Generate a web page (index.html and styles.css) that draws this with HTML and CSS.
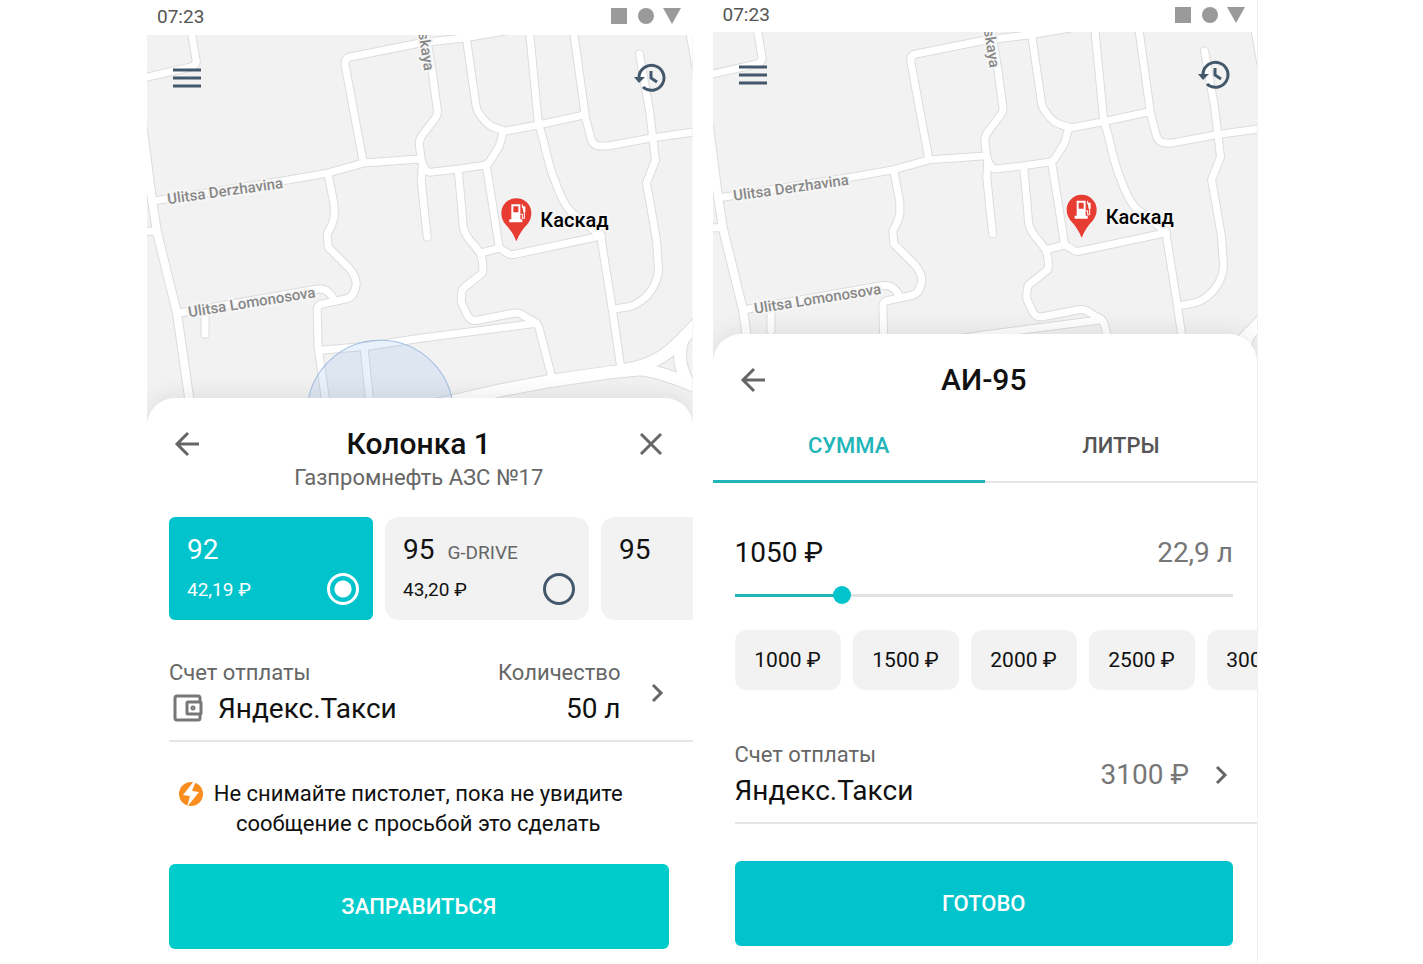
FILE: index.html
```html
<!DOCTYPE html>
<html lang="ru">
<head>
    <meta charset="UTF-8">
    <meta name="viewport" content="width=device-width, initial-scale=1.0">
    <title>Заправка</title>

    <link rel="stylesheet" href="styles.css">
</head>
<body>
    <!-- Shared drawings -->
    <svg class="sprite" aria-hidden="true">
        <defs>
            <g id="roads">
                <path d="M191 30 L196 60 Q197 65 191 67 L147 77 L140 79"/>
                <path d="M140 231 H157"/>
                <path d="M153 201 L287 180 L327 173 L363 163 L420 159"/>
                <path d="M363 162 L345 65 Q344 58 350 57 L420 43 L463 38 L505 31"/>
                <path d="M425 30 L432 72 L437 109 Q438 114 435 118 L422 135 Q419 139 419 144 L421 160 Q425 173 431 172 L457 169 L485 165 L489 162 L499 146 L503 131"/>
                <path d="M422 165 L421 180 L424 210 L427 237"/>
                <path d="M466 38 L476 107 Q477 112 480 115 Q487 125 493 127 L505 131 L537 125 L583 115"/>
                <path d="M529 30 L538 123 L543 140 Q549 168 555 182 Q562 202 570 211 L601 236"/>
                <path d="M573 30 L585 117 L590 136 Q592 146 600 146 L607 146 L650 138 L700 131"/>
                <path d="M639 54 L649 110 L652 135 L655 160 L646 183 L650 205 L656 240 L658 268 Q658 282 647 295 Q636 306 625 307 L613 309"/>
                <path d="M689 30 L697 76"/>
                <path d="M458 171 L461 203 L463 227 Q465 236 474 245 L480 253 Q484 264 482 273 L463 288 Q461 291 461 302 L467 315 Q470 321 477 320 L513 313 Q519 312 524 316 L535 322 Q539 326 540 333 L551 375"/>
                <path d="M486 166 L492 203 L499 248"/>
                <path d="M480 253 L499 248 L509 254 Q511 255 515 254 L600 236"/>
                <path d="M600 234 L612 310 L620 365"/>
                <path d="M536 323 L420 338 L367 346 L320 350"/>
                <path d="M178 313 L316 289 Q328 287 334 300"/>
                <path d="M205 315 V334"/>
                <path d="M328 174 L334 205 L334 217 Q333 223 327 234 L328 247 L349 268 Q356 276 356 284 Q354 298 344 299 L321 304 Q317 305 317 310 L318 347 L325 397 L328 425"/>
                <path d="M364 348 L369 397 L371 425"/>
            </g>
            <g id="wide-roads">
                <path d="M143 130 L152 200 L157 232 L177 313 L189 397 L193 425"/>
            </g>
            <g id="highway">
                <path d="M430 406 L500 390 L548 381 L610 372 L640 369 Q663 372 700 388"/>
                <path d="M620 370 Q650 367 671 349 Q686 336 702 317"/>
                <path d="M684 336 Q674 355 686 380"/>
            </g>
        </defs>

        <symbol id="city" viewBox="147 35 545 390" preserveAspectRatio="xMinYMin slice">
            <rect class="land" x="147" y="35" width="900" height="700"/>
            <g class="road-edge">
                <use href="#roads"/>
                <use href="#wide-roads" class="edge-wide"/>
                <use href="#highway" class="edge-highway"/>
            </g>
            <g class="road-fill">
                <use href="#roads"/>
                <use href="#wide-roads" class="fill-wide"/>
                <use href="#highway" class="fill-highway"/>
            </g>
            <circle class="area" cx="380" cy="413" r="73"/>
            <g class="street">
                <text transform="translate(168 204) rotate(-8)">Ulitsa Derzhavina</text>
                <text transform="translate(189 317) rotate(-9)">Ulitsa Lomonosova</text>
                <text transform="translate(418 33) rotate(81)">skaya</text>
            </g>
            <path class="pin" d="M516 241 Q512 231 505 224 Q501 219 501 213 A15 15 0 0 1 531 213 Q531 219 527 224 Q520 231 516 241 Z"/>
            <path class="pump" fill-rule="evenodd" d="M511 204 H520 V219 H522 V222 H509 V219 H511 Z M513 206 V212 H518 V206 Z"/>
            <path class="hose" d="M520 214 H522 V218 H524 V209 L522 207 V204"/>
            <path class="pump" d="M522 206 H525 V212 H523 Z"/>
            <text class="station" x="540" y="227">Каскад</text>
        </symbol>

        <symbol id="icon-history" viewBox="0 0 32 32">
            <path class="line" d="M5 15 A12.5 12.5 0 1 1 9 25 M17 9 V16 L23 20"/>
            <path class="solid" d="M0 15 H11 L5 21 Z"/>
        </symbol>
        <symbol id="icon-menu" viewBox="0 0 28 20">
            <path class="line" d="M0 2 H28 M0 10 H28 M0 18 H28"/>
        </symbol>
        <symbol id="icon-back" viewBox="0 0 26 26">
            <path class="line" d="M25 13 H3 M14 2 L3 13 L14 24"/>
        </symbol>
        <symbol id="icon-close" viewBox="0 0 26 26">
            <path class="line" d="M3 3 L23 23 M23 3 L3 23"/>
        </symbol>
        <symbol id="icon-next" viewBox="0 0 24 24">
            <path class="line" d="M8 4 L16 12 L8 20"/>
        </symbol>
        <symbol id="icon-system" viewBox="0 0 72 18">
            <path class="solid" d="M1 1 H17 V17 H1 Z M53 1 H71 L62 17 Z"/>
            <circle class="solid" cx="36" cy="9" r="8"/>
        </symbol>
    </svg>

    <div class="screens">
        <section class="phone">
            <div class="status">
                <span>07:23</span>
                <svg class="system"><use href="#icon-system"/></svg>
            </div>
            <div class="map">
                <svg class="city"><use href="#city"/></svg>
                <div class="map-bar">
                    <button type="button" aria-label="Меню"><svg class="menu"><use href="#icon-menu"/></svg></button>
                    <button type="button" aria-label="История"><svg class="history"><use href="#icon-history"/></svg></button>
                </div>
            </div>

            <div class="sheet">
                <div class="sheet-head">
                    <button type="button" aria-label="Назад"><svg class="nav-icon"><use href="#icon-back"/></svg></button>
                    <h1>Колонка 1</h1>
                    <button type="button" aria-label="Закрыть"><svg class="nav-icon"><use href="#icon-close"/></svg></button>
                </div>
                <p class="subtitle">Газпромнефть АЗС №17</p>

                <div class="fuels">
                    <label class="fuel selected">
                        <span class="fuel-name">92</span>
                        <span class="fuel-price">42,19 ₽</span>
                        <input type="radio" name="fuel" checked>
                    </label>
                    <label class="fuel">
                        <span class="fuel-name">95 <small>G-DRIVE</small></span>
                        <span class="fuel-price">43,20 ₽</span>
                        <input type="radio" name="fuel">
                    </label>
                    <label class="fuel">
                        <span class="fuel-name">95</span>
                        <input type="radio" name="fuel">
                    </label>
                </div>

                <a class="account" href="#">
                    <span class="account-info">
                        <span class="caption">Счет отплаты</span>
                        <span class="value">
                            <svg class="wallet" viewBox="0 0 30 28">
                                <path d="M27 8 V4 Q27 2 25 2 H4 Q2 2 2 4 V24 Q2 26 4 26 H25 Q27 26 27 24 V20"/>
                                <rect x="14" y="8" width="14" height="12" rx="1"/>
                                <circle cx="20" cy="14" r="1"/>
                            </svg>
                            Яндекс.Такси
                        </span>
                    </span>
                    <span class="amount">
                        <span class="caption">Количество</span>
                        <span class="value">50 л</span>
                    </span>
                    <svg class="next"><use href="#icon-next"/></svg>
                </a>

                <p class="notice">
                    <svg class="bolt" viewBox="0 0 26 26">
                        <circle cx="13" cy="13" r="12"/>
                        <path d="M16 0 L5 14 L12 15 L9 26 L21 11 L14 10 L18 0 Z"/>
                    </svg>
                    <span>Не снимайте пистолет, пока не увидите<br>сообщение с просьбой это сделать</span>
                </p>

                <button type="button" class="submit submit-fuel">ЗАПРАВИТЬСЯ</button>
            </div>
        </section>

        <section class="phone phone-sum">
            <div class="status">
                <span>07:23</span>
                <svg class="system"><use href="#icon-system"/></svg>
            </div>
            <div class="map">
                <svg class="city"><use href="#city"/></svg>
                <div class="map-bar">
                    <button type="button" aria-label="Меню"><svg class="menu"><use href="#icon-menu"/></svg></button>
                    <button type="button" aria-label="История"><svg class="history"><use href="#icon-history"/></svg></button>
                </div>
            </div>

            <div class="sheet">
                <div class="sheet-head">
                    <button type="button" aria-label="Назад"><svg class="nav-icon"><use href="#icon-back"/></svg></button>
                    <h1>АИ-95</h1>
                </div>

                <div class="tabs" role="tablist">
                    <button type="button" role="tab" class="tab active" aria-selected="true">СУММА</button>
                    <button type="button" role="tab" class="tab" aria-selected="false">ЛИТРЫ</button>
                </div>

                <div class="total">
                    <label for="sum">1050 ₽</label>
                    <span class="liters">22,9 л</span>
                </div>
                <input type="range" id="sum" class="slider" min="0" max="5100" step="50" value="1050" style="--fill: 21%">

                <div class="chips">
                    <button type="button">1000 ₽</button>
                    <button type="button">1500 ₽</button>
                    <button type="button">2000 ₽</button>
                    <button type="button">2500 ₽</button>
                    <button type="button">3000 ₽</button>
                </div>

                <a class="account" href="#">
                    <span class="account-info">
                        <span class="caption">Счет отплаты</span>
                        <span class="value">Яндекс.Такси</span>
                    </span>
                    <span class="value balance">3100 ₽</span>
                    <svg class="next"><use href="#icon-next"/></svg>
                </a>

                <button type="button" class="submit">ГОТОВО</button>
            </div>
        </section>
    </div>
</body>
</html>
```
FILE: styles.css
```css
* {
    box-sizing: border-box;
}

body {
    margin: 0;
    background: white;
    color: #111;
    font-family: Roboto, sans-serif;
}

h1,
p {
    margin: 0;
}

button {
    border: none;
    padding: 0;
    background: none;
    color: inherit;
    font-family: inherit;
    cursor: pointer;
}

svg {
    display: block;
}

.sprite {
    position: absolute;
    width: 0;
    height: 0;
}

.line {
    fill: none;
    stroke: currentColor;
    stroke-width: 3;
}

.solid {
    fill: currentColor;
}

.screens {
    display: grid;
    grid-template-columns: 1fr 1fr;
    gap: 20px;
    padding: 0 165px 0 147px;
    min-height: 100vh;
}

.phone {
    display: flex;
    flex-direction: column;
    overflow: hidden;
}

.phone-sum {
    border-right: 1px solid #f0f0f0;
}

.status {
    display: flex;
    align-items: center;
    justify-content: space-between;
    height: 35px;
    padding: 0 11px 3px 10px;
    color: #555;
    font-size: 19px;
}

.phone-sum .status {
    height: 32px;
}

.system {
    width: 72px;
    height: 18px;
    color: #9a9a9a;
}

/* Map */
.map {
    position: relative;
    height: 390px;
}

.phone-sum .map {
    height: 329px;
}

.city {
    width: 100%;
    height: 390px;
}

.phone-sum .city {
    height: 329px;
}

.map-bar {
    position: absolute;
    top: 27px;
    left: 26px;
    right: 27px;
    display: flex;
    align-items: center;
    justify-content: space-between;
    color: #44586c;
}

.menu {
    width: 28px;
    height: 20px;
}

.history {
    width: 32px;
    height: 32px;
}

.land {
    fill: #f2f2f2;
}

.road-edge,
.road-fill {
    fill: none;
    stroke-linecap: round;
    stroke-linejoin: round;
}

.road-edge {
    stroke: #dcdcdc;
    stroke-width: 9px;
}

.road-fill {
    stroke: white;
    stroke-width: 7px;
}

.edge-wide {
    stroke-width: 10px;
}

.fill-wide {
    stroke-width: 8px;
}

.edge-highway {
    stroke-width: 14px;
}

.fill-highway {
    stroke-width: 12px;
}

.area {
    fill: rgba(120, 170, 240, 0.16);
    stroke: #a3bfe3;
    stroke-width: 1px;
}

.street {
    fill: #888;
    stroke: #f6f6f6;
    stroke-width: 4px;
    paint-order: stroke;
    font-size: 15px;
    font-weight: 500;
}

.pin {
    fill: #e63c32;
}

.pump {
    fill: white;
}

.hose {
    fill: none;
    stroke: white;
    stroke-width: 1px;
}

.station {
    fill: black;
    stroke: #f6f6f6;
    stroke-width: 4px;
    paint-order: stroke;
    font-size: 20px;
    font-weight: 500;
}

/* Bottom sheet */
.sheet {
    position: relative;
    flex: 1;
    margin-top: -27px;
    padding: 24px 24px 15px 22px;
    border-radius: 28px 28px 0 0;
    background: white;
    box-shadow: 0 -2px 24px rgba(0, 0, 0, 0.09);
}

.sheet-head {
    display: grid;
    grid-template-columns: 36px 1fr 36px;
    align-items: center;
    justify-items: center;
    color: #666;
}

.sheet-head h1 {
    color: #111;
    font-size: 30px;
    font-weight: 500;
    line-height: 44px;
}

.nav-icon {
    width: 26px;
    height: 26px;
}

.subtitle {
    color: #666;
    font-size: 22px;
    line-height: 24px;
    text-align: center;
}

.fuels {
    display: flex;
    gap: 12px;
    margin: 27px -24px 0 0;
    overflow: hidden;
}

.fuel {
    display: grid;
    grid-template-columns: 1fr 32px;
    grid-template-rows: 36px 32px;
    align-items: center;
    row-gap: 6px;
    flex: 0 0 204px;
    height: 103px;
    padding: 14px 14px 15px 18px;
    border-radius: 14px;
    background: #f2f2f2;
}

.fuel.selected {
    border-radius: 6px;
    background: #00c3cb;
    color: white;
}

.fuel-name {
    grid-column: 1 / 3;
    font-size: 28px;
}

.fuel-name small {
    margin-left: 6px;
    color: #666;
    font-size: 19px;
}

.fuel-price {
    font-size: 19px;
}

.fuel input {
    grid-column: 2;
    appearance: none;
    width: 32px;
    height: 32px;
    margin: 0;
    border: 3px solid #44586c;
    border-radius: 50%;
}

.fuel input:checked {
    border-color: white;
    background: radial-gradient(white 8px, transparent 9px);
}

.account {
    display: flex;
    align-items: center;
    gap: 24px;
    margin: 39px -24px 0 0;
    padding: 0 24px 13px 0;
    border-bottom: 2px solid #e6e6e6;
    color: inherit;
    text-decoration: none;
}

.account-info {
    flex: 1;
}

.amount {
    text-align: right;
}

.caption {
    display: block;
    margin-bottom: 4px;
    color: #666;
    font-size: 22px;
    line-height: 28px;
}

.value {
    display: block;
    font-size: 28px;
    line-height: 36px;
}

.wallet {
    display: inline-block;
    width: 30px;
    height: 28px;
    margin: 0 8px 0 4px;
    vertical-align: -4px;
    fill: none;
    stroke: #777;
    stroke-width: 3px;
}

.next {
    width: 24px;
    height: 24px;
    color: #666;
}

.notice {
    display: flex;
    justify-content: center;
    gap: 10px;
    margin-top: 37px;
    padding-right: 37px;
    font-size: 22px;
    line-height: 30px;
    text-align: center;
}

.bolt {
    flex: none;
    width: 26px;
    height: 26px;
    margin-top: 2px;
    fill: #fb8c1e;
}

.bolt path {
    fill: white;
}

.submit {
    display: block;
    width: 100%;
    height: 85px;
    margin-top: 37px;
    border-radius: 6px;
    background: #00c3cb;
    color: white;
    font-size: 22px;
    font-weight: 500;
}

.submit-fuel {
    margin-top: 25px;
    background: #00cccb;
}

/* Sum screen */
.tabs {
    display: grid;
    grid-template-columns: 1fr 1fr;
    margin: 9px -24px 0 -22px;
    box-shadow: inset 0 -2px #e6e6e6;
}

.tab {
    height: 72px;
    border-bottom: 3px solid transparent;
    color: #555;
    font-size: 22px;
    font-weight: 500;
}

.tab.active {
    border-color: #1fb5b9;
    color: #1fb5b9;
}

.total {
    display: flex;
    justify-content: space-between;
    margin-top: 52px;
    font-size: 28px;
    line-height: 36px;
}

.liters,
.balance {
    color: #777;
}

.slider {
    display: block;
    appearance: none;
    width: 100%;
    height: 20px;
    margin: 14px 0 0;
    background: linear-gradient(to right, #1fb5b9 var(--fill), #e2e2e2 var(--fill)) center / 100% 3px no-repeat;
}

.slider::-webkit-slider-thumb {
    appearance: none;
    width: 18px;
    height: 18px;
    border-radius: 50%;
    background: #00c3cb;
}

.chips {
    display: flex;
    gap: 12px;
    margin: 25px -24px 0 0;
    overflow: hidden;
}

.chips button {
    flex: 0 0 106px;
    height: 60px;
    border-radius: 12px;
    background: #f2f2f2;
    font-size: 21px;
}

.phone-sum .account {
    gap: 20px;
    margin-top: 51px;
}
```
